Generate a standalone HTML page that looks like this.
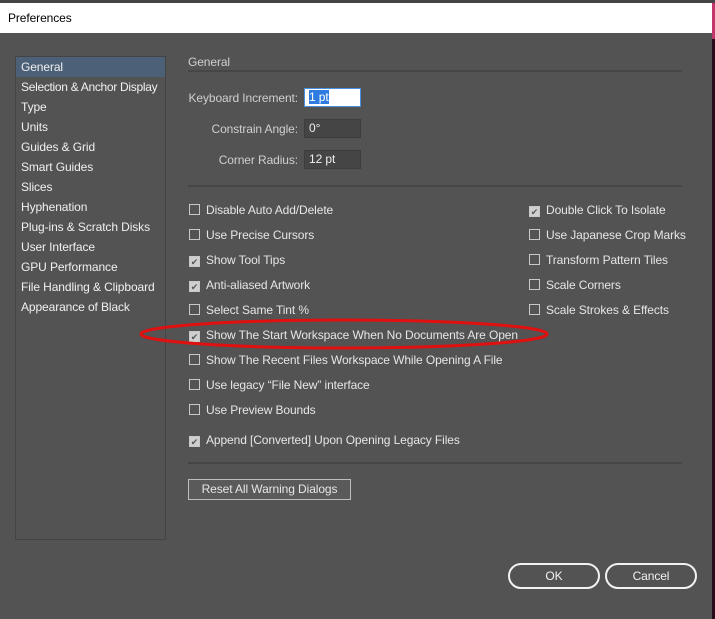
<!DOCTYPE html>
<html><head><style>
body{margin:0;width:715px;height:619px;background:#2a0d1a;position:relative;overflow:hidden;font-family:"Liberation Sans",sans-serif;font-size:12px;letter-spacing:-0.1px;color:#e6e6e6}
.top{position:absolute;left:0;top:0;width:715px;height:3px;background:#444}
.pink{position:absolute;left:712px;top:3px;width:3px;height:36px;background:#c2376b}
.dlg{position:absolute;left:0;top:3px;width:712px;height:616px;background:#535353}
.title{position:absolute;left:0;top:0;width:712px;height:30px;background:#fff;color:#000;font-size:12px;line-height:30px;padding-left:8px;box-sizing:border-box}
.side{position:absolute;left:15px;top:53px;width:151px;height:484px;border:1px solid #444;background:#535353;box-sizing:border-box;white-space:nowrap;overflow:hidden}
.side div{height:20px;line-height:20px;padding-left:5px;color:#f0f0f0}
.side .sel{background:#4c6178}
.abs{position:absolute;white-space:nowrap}
.line{position:absolute;height:2px;background:#464646;left:188px;width:494px}
.inp{position:absolute;left:304px;width:57px;height:19px;background:#454545;border:1px solid #3d3d3d;box-sizing:border-box;line-height:17px;padding-left:4px;color:#eee}
.lab{position:absolute;right:414px;color:#cfcfcf}
.cb{position:absolute;white-space:nowrap;line-height:14px}
.cb:before{content:"";display:inline-block;width:11px;height:11px;border:1px solid #c8c8c8;vertical-align:-1px;margin-right:6px;box-sizing:border-box}
.cb.c:before{content:"✔";background:#cfcfcf;color:#555;font-size:9px;line-height:10px;text-align:center}
.btn{position:absolute;border:2px solid #f2f2f2;border-radius:13px;height:26px;line-height:22px;text-align:center;box-sizing:border-box;color:#f2f2f2}
</style></head><body>
<div class="top"></div><div class="pink"></div>
<div class="dlg">
<div class="title">Preferences</div>
<div class="side">
<div class="sel">General</div><div style="letter-spacing:-0.3px">Selection &amp; Anchor Display</div><div>Type</div><div>Units</div><div>Guides &amp; Grid</div><div>Smart Guides</div><div>Slices</div><div>Hyphenation</div><div>Plug-ins &amp; Scratch Disks</div><div>User Interface</div><div>GPU Performance</div><div>File Handling &amp; Clipboard</div><div>Appearance of Black</div>
</div>
<div class="abs" style="left:188px;top:52px;color:#d0d0d0">General</div>
<div class="line" style="top:67px"></div>
<div class="lab" style="top:88px">Keyboard Increment:</div>
<div class="inp" style="top:85px;border:1px solid #4a90e2;background:#fff;color:#fff"><span style="background:#2f7ce0">1 pt</span></div>
<div class="lab" style="top:119px">Constrain Angle:</div><div class="inp" style="top:116px">0°</div>
<div class="lab" style="top:150px">Corner Radius:</div><div class="inp" style="top:147px">12 pt</div>
<div class="line" style="top:182px"></div>
<div class="cb" style="left:189px;top:200px">Disable Auto Add/Delete</div>
<div class="cb" style="left:189px;top:225px">Use Precise Cursors</div>
<div class="cb c" style="left:189px;top:250px">Show Tool Tips</div>
<div class="cb c" style="left:189px;top:275px">Anti-aliased Artwork</div>
<div class="cb" style="left:189px;top:300px">Select Same Tint %</div>
<div class="cb c" style="left:189px;top:325px">Show The Start Workspace When No Documents Are Open</div>
<div class="cb" style="left:189px;top:350px">Show The Recent Files Workspace While Opening A File</div>
<div class="cb" style="left:189px;top:375px">Use legacy “File New” interface</div>
<div class="cb" style="left:189px;top:400px">Use Preview Bounds</div>
<div class="cb c" style="left:189px;top:430px">Append [Converted] Upon Opening Legacy Files</div>
<div class="cb c" style="left:529px;top:200px">Double Click To Isolate</div>
<div class="cb" style="left:529px;top:225px">Use Japanese Crop Marks</div>
<div class="cb" style="left:529px;top:250px">Transform Pattern Tiles</div>
<div class="cb" style="left:529px;top:275px">Scale Corners</div>
<div class="cb" style="left:529px;top:300px">Scale Strokes &amp; Effects</div>
<div class="line" style="top:459px"></div>
<div class="abs" style="left:188px;top:476px;width:163px;height:21px;border:1px solid #bdbdbd;box-sizing:border-box;line-height:19px;text-align:center;background:#5a5a5a">Reset All Warning Dialogs</div>
<div class="btn" style="left:508px;top:560px;width:92px">OK</div>
<div class="btn" style="left:605px;top:560px;width:92px">Cancel</div>
</div>
<svg style="position:absolute;left:0;top:0" width="715" height="619"><ellipse cx="344" cy="334" rx="203" ry="14" fill="none" stroke="#e01010" stroke-width="3"/></svg>
</body></html>
